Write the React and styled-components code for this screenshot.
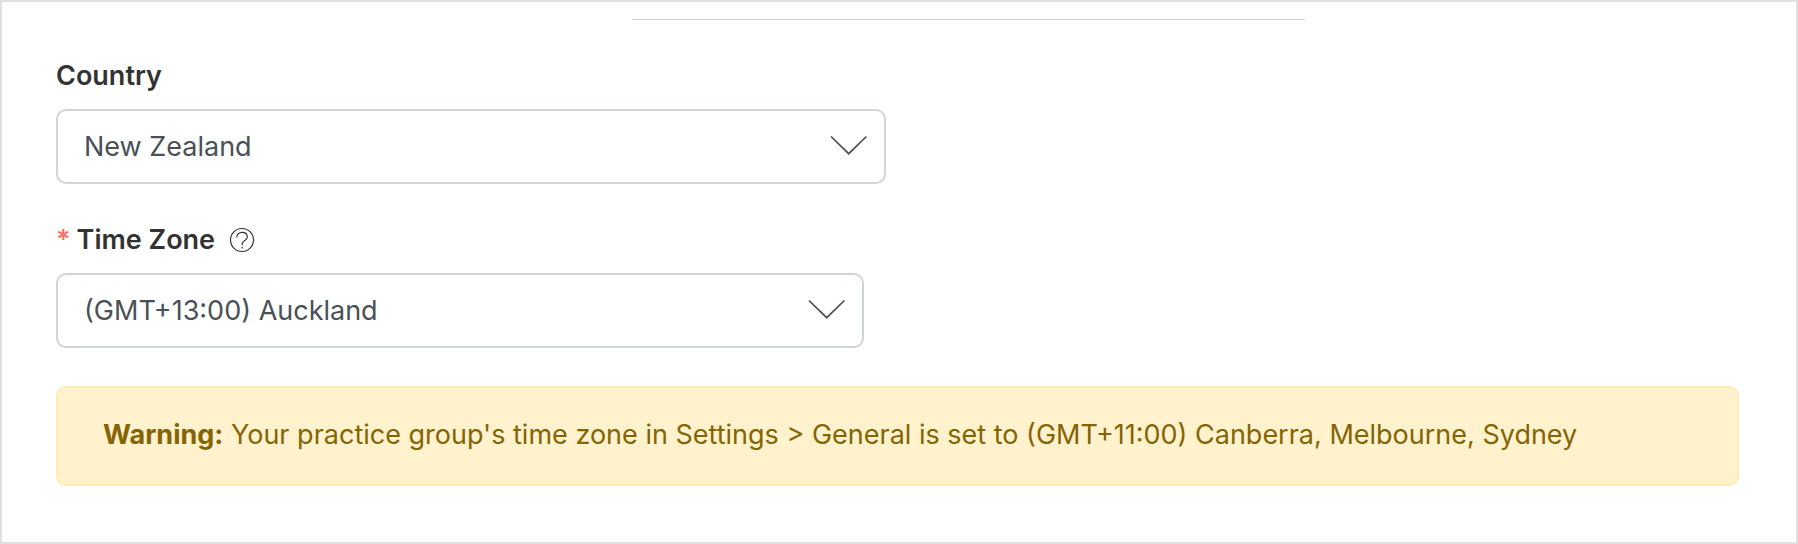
import React from 'react'
import styled, { createGlobalStyle } from 'styled-components'

const GlobalStyle = createGlobalStyle`
  *, *::before, *::after {
    box-sizing: border-box;
  }

  body {
    margin: 0;
    background: #fff;
    color: #333;
    font-family: Inter, "Liberation Sans", sans-serif;
    font-size: 27px;
    line-height: 36px;
  }
`

const Page = styled.main`
  min-height: 100vh;
  padding: 17px 57px 56px 54px;
  border: 2px solid #e0e0e0;
`

const Divider = styled.hr`
  width: 40%;
  height: 1px;
  margin: 0 0 38px 34.2%;
  border: 0;
  background: #d0d0d0;
`

const Field = styled.div`
  margin-bottom: 38px;
`

const LabelRow = styled.div`
  display: flex;
  align-items: center;
  margin-bottom: 15px;
`

const Label = styled.label`
  font-weight: 600;
`

const Required = styled.span`
  margin-right: 6px;
  color: #f1736a;
`

const HelpButton = styled.button`
  display: flex;
  margin-left: 14px;
  padding: 0;
  border: 0;
  background: none;
  color: #333;
  cursor: pointer;
`

const SelectBox = styled.div`
  position: relative;
  width: ${props => props.$width};
`

const Select = styled.select`
  display: block;
  width: 100%;
  height: 75px;
  padding: 0 72px 0 26px;
  border: 2px solid #ced4da;
  border-radius: 10px;
  appearance: none;
  background: #fff;
  color: #495057;
  font: inherit;
`

const Chevron = styled.svg`
  position: absolute;
  top: 26px;
  right: 18px;
  pointer-events: none;
`

const Alert = styled.div`
  padding: 29px 45px 31px;
  border: 2px solid #ffebb3;
  border-radius: 10px;
  background: #fff2cd;
  color: #856404;
`

const HelpIcon = () => (
  <svg width="26" height="26" viewBox="0 0 26 26" fill="none" stroke="currentColor" strokeWidth="1.2" aria-hidden="true">
    <circle cx="13" cy="13" r="11.5" />
    <path d="M7.8 10.4C7.8 7.2 10 5.3 13.1 5.3s5.2 2 5.2 4.8c0 3.8-5.1 3.6-5.1 6.6v1.5" />
    <path d="M13.2 19.8v1.8" />
  </svg>
)

const SelectField = ({ id, width, value }) => (
  <SelectBox $width={width}>
    <Select id={id} defaultValue={value}>
      <option value={value}>{value}</option>
    </Select>
    <Chevron width="38" height="20" viewBox="0 0 38 20" fill="none" stroke="#495057" strokeWidth="1.7" aria-hidden="true">
      <path d="M1 1.5l17.7 17.2L36.4 1.5" />
    </Chevron>
  </SelectBox>
)

const App = () => (
  <>
    <GlobalStyle />
    <Page>
      <Divider />

      <Field>
        <LabelRow>
          <Label htmlFor="country">Country</Label>
        </LabelRow>
        <SelectField id="country" width="49.3%" value="New Zealand" />
      </Field>

      <Field>
        <LabelRow>
          <Label htmlFor="timezone"><Required>*</Required>Time Zone</Label>
          <HelpButton type="button" aria-label="Time Zone">
            <HelpIcon />
          </HelpButton>
        </LabelRow>
        <SelectField id="timezone" width="48%" value="(GMT+13:00) Auckland" />
      </Field>

      <Alert role="alert">
        <strong>Warning:</strong> Your practice group's time zone in Settings &gt; General is set to (GMT+11:00) Canberra, Melbourne, Sydney
      </Alert>
    </Page>
  </>
)

export default App
